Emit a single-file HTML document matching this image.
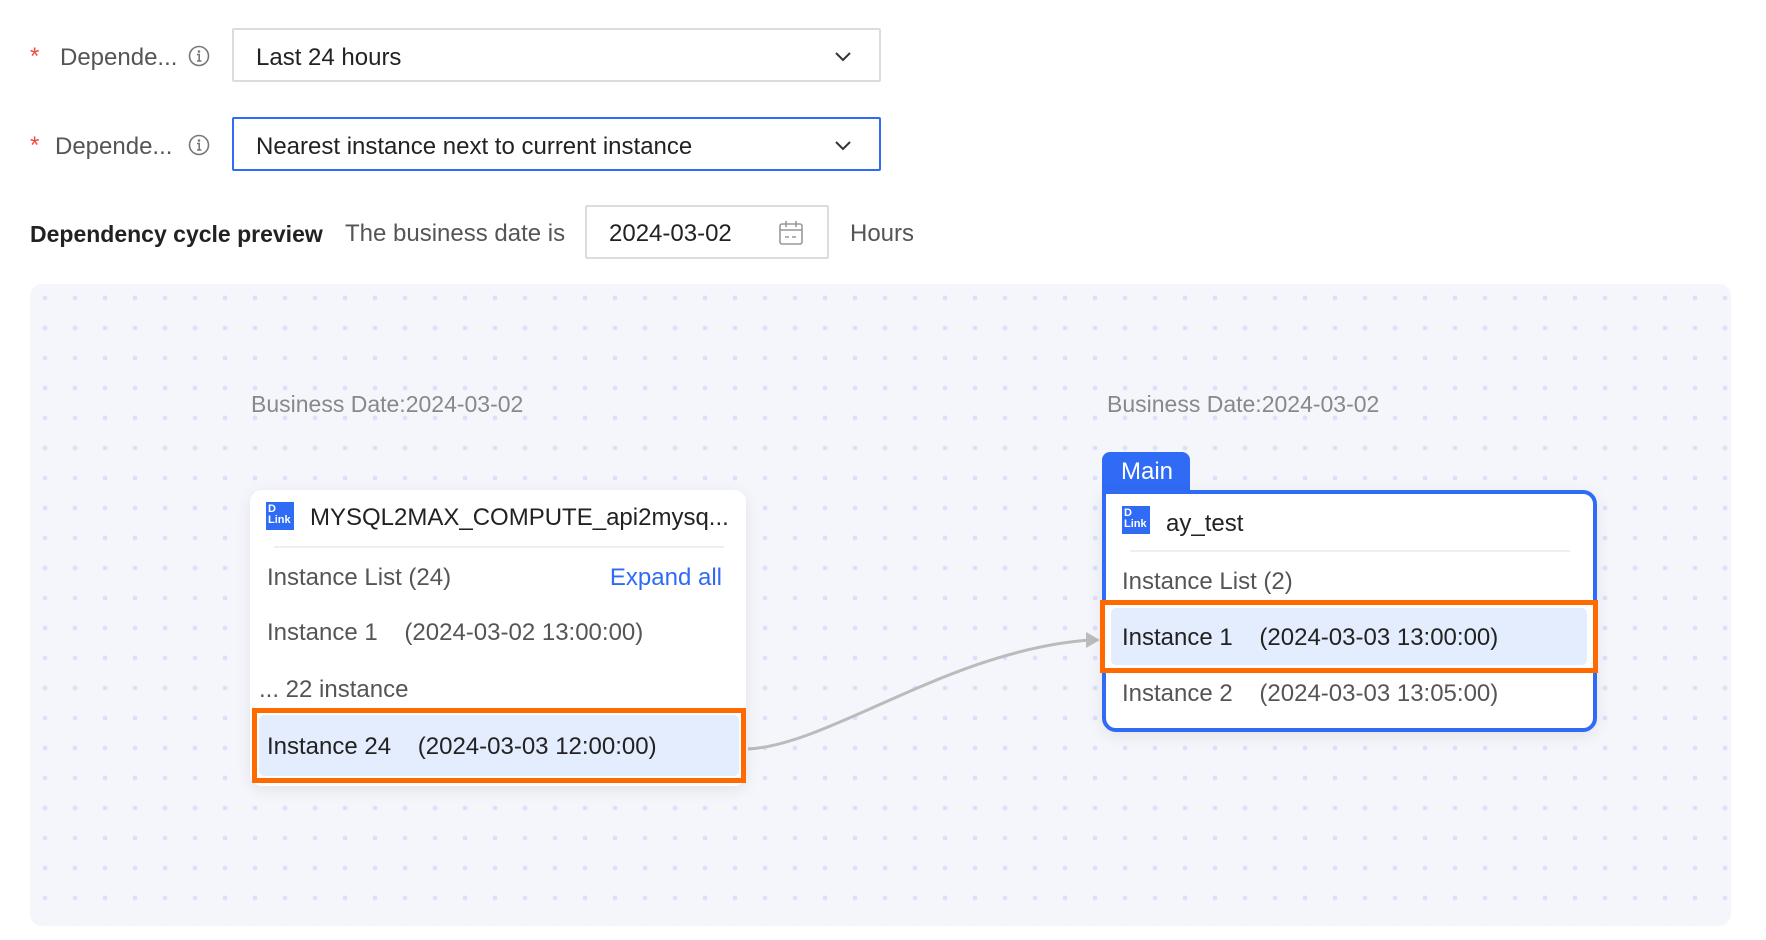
<!DOCTYPE html>
<html><head><meta charset="utf-8"><style>
*{box-sizing:border-box;margin:0;padding:0}
body{width:1766px;height:940px;background:#fff;font-family:"Liberation Sans",Arial,sans-serif;color:#333;position:relative;overflow:hidden}
.abs{position:absolute}
.t{position:absolute;white-space:nowrap;line-height:1;font-size:24px}
.sel{position:absolute;left:232px;width:649px;height:54px;border:2px solid #dcdcdc;border-radius:2px;background:#fff}
.chev{position:absolute;right:26px;top:16px}
.canvas{position:absolute;left:30px;top:284px;width:1701px;height:642px;border-radius:12px;background-color:#f5f6fc;
background-image:radial-gradient(circle,#dbe1fb 2.2px,transparent 2.6px);background-size:30px 30px;background-position:0px -1px}
.card{position:absolute;background:#fff;border-radius:12px;box-shadow:0 4px 16px rgba(0,0,0,.08)}
.icon{position:absolute;width:28px;height:28px;background:#2f6bf5;color:#fff;font-size:11px;line-height:11px;padding:2px 0 0 2px;font-weight:bold}
.g{letter-spacing:0}
</style></head><body>
<div class="t" style="left:30px;top:45px;color:#f5483b">*</div>
<div class="t" style="left:60px;top:46px;color:#555">Depende...</div>
<svg class="abs" style="left:188px;top:45px" width="22" height="22" viewBox="0 0 22 22"><circle cx="11" cy="11" r="9.5" fill="none" stroke="#777" stroke-width="1.6"/><circle cx="11" cy="6.5" r="1.3" fill="#777"/><path d="M9 9.5h2.2v6.5M9 16h4.5" stroke="#777" stroke-width="1.6" fill="none"/></svg>
<div class="sel" style="top:28px"><div class="t" style="left:22px;top:16px;color:#222">Last 24 hours</div>
<svg class="chev" width="20" height="20"><path d="M3 7l7 7 7-7" stroke="#333" stroke-width="2" fill="none"/></svg></div>

<div class="t" style="left:30px;top:134px;color:#f5483b">*</div>
<div class="t" style="left:55px;top:135px;color:#555">Depende...</div>
<svg class="abs" style="left:188px;top:134px" width="22" height="22" viewBox="0 0 22 22"><circle cx="11" cy="11" r="9.5" fill="none" stroke="#777" stroke-width="1.6"/><circle cx="11" cy="6.5" r="1.3" fill="#777"/><path d="M9 9.5h2.2v6.5M9 16h4.5" stroke="#777" stroke-width="1.6" fill="none"/></svg>
<div class="sel" style="top:117px;border-color:#2f6bf5"><div class="t" style="left:22px;top:16px;color:#222">Nearest instance next to current instance</div>
<svg class="chev" width="20" height="20"><path d="M3 7l7 7 7-7" stroke="#333" stroke-width="2" fill="none"/></svg></div>

<div class="t" style="left:30px;top:223px;font-weight:bold;color:#222;font-size:23px">Dependency cycle preview</div>
<div class="t" style="left:345px;top:222px;color:#555">The business date is</div>
<div class="abs" style="left:585px;top:205px;width:244px;height:54px;border:2px solid #dcdcdc;border-radius:2px"></div>
<div class="t" style="left:609px;top:222px;color:#222">2024-03-02</div>
<svg class="abs" style="left:778px;top:219px" width="26" height="28" viewBox="0 0 26 28"><rect x="2" y="5" width="22" height="20" rx="2" fill="none" stroke="#999" stroke-width="1.6"/><path d="M2 11h22M8 2v6M18 2v6M7 18h4M14 18h4" stroke="#999" stroke-width="1.6"/></svg>
<div class="t" style="left:850px;top:222px;color:#555">Hours</div>

<div class="canvas"></div>
<div class="t" style="left:251px;top:393px;color:#888;font-size:23px">Business Date:2024-03-02</div>
<div class="t" style="left:1107px;top:393px;color:#888;font-size:23px">Business Date:2024-03-02</div>

<svg class="abs" style="left:0;top:0" width="1766" height="940"><path d="M748 749 C 830 745, 950 650, 1090 640" stroke="#bbb" stroke-width="3" fill="none"/><path d="M1100 640 l-14 -8 v16z" fill="#bbb"/></svg>

<div class="card" style="left:250px;top:490px;width:496px;height:296px">
<div class="icon" style="left:16px;top:12px">D<br>Link</div>
<div class="t" style="left:60px;top:16px;color:#222;font-size:24px">MYSQL2MAX_COMPUTE_api2mysq...</div>
<div class="abs" style="left:24px;top:56px;width:450px;height:2px;background:#eee"></div>
<div class="t" style="left:17px;top:76px;color:#555">Instance List (24)</div>
<div class="t" style="right:24px;top:76px;color:#2f6bf5">Expand all</div>
<div class="t" style="left:17px;top:131px;color:#555">Instance 1 &nbsp;&nbsp;&nbsp;(2024-03-02 13:00:00)</div>
<div class="t" style="left:9px;top:188px;color:#555">... 22 instance</div>
</div>
<div class="abs" style="left:252px;top:708px;width:494px;height:75px;border:5px solid #ff6a00;background:#fff"><div style="position:absolute;left:2px;top:2px;right:2px;bottom:2px;background:#e4edfd;border-radius:5px"></div></div>
<div class="t" style="left:267px;top:735px;color:#222">Instance 24 &nbsp;&nbsp;&nbsp;(2024-03-03 12:00:00)</div>

<div class="abs" style="left:1102px;top:452px;width:88px;height:42px;background:#2f6bf5;border-radius:8px 8px 0 0"></div>
<div class="t" style="left:1121px;top:460px;color:#fff;font-size:24px">Main</div>
<div class="abs" style="left:1102px;top:490px;width:495px;height:242px;border:4px solid #2f6bf5;border-radius:0 14px 14px 14px;background:#fff;box-shadow:0 4px 16px rgba(0,0,0,.08)"></div>
<div class="icon" style="left:1122px;top:506px">D<br>Link</div>
<div class="t" style="left:1166px;top:512px;color:#222;font-size:24px">ay_test</div>
<div class="abs" style="left:1130px;top:550px;width:440px;height:2px;background:#eee"></div>
<div class="t" style="left:1122px;top:570px;color:#555">Instance List (2)</div>
<div class="abs" style="left:1100px;top:600px;width:498px;height:73px;border:5px solid #ff6a00;background:#fff"><div style="position:absolute;left:6px;top:3px;right:6px;bottom:3px;background:#e4edfd;border-radius:5px"></div></div>
<div class="t" style="left:1122px;top:626px;color:#222">Instance 1 &nbsp;&nbsp;&nbsp;(2024-03-03 13:00:00)</div>
<div class="t" style="left:1122px;top:682px;color:#555">Instance 2 &nbsp;&nbsp;&nbsp;(2024-03-03 13:05:00)</div>
</body></html>
